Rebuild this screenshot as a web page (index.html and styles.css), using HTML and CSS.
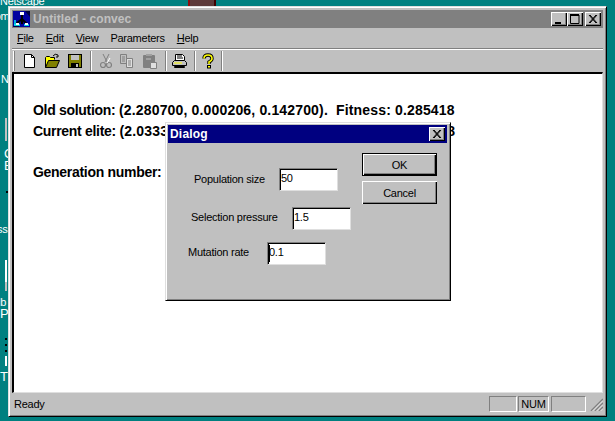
FILE: index.html
```html
<!DOCTYPE html>
<html lang="en">
<head>
<meta charset="UTF-8">
<title>Untitled - convec</title>
<link rel="stylesheet" href="styles.css">
</head>
<body>
  <!-- desktop icons showing behind the window -->
  <div class="desk-text" style="left:0;top:-6px">Netscape</div>
  <div class="desk-text" style="left:-13px;top:9px">Com</div>
  <div class="desk-text" style="left:1px;top:72px">N</div>
  <div class="desk-text big" style="left:4px;top:147px">C</div>
  <div class="desk-text big" style="left:4px;top:159px">E</div>
  <div class="desk-text" style="left:-10px;top:222px">Ass</div>
  <div class="desk-text" style="left:-9px;top:295px">Alb</div>
  <div class="desk-text big" style="left:0;top:307px">P</div>
  <div class="desk-text big" style="left:0;top:370px">T</div>
  <div class="desk-icon" style="left:188px;top:0;width:28px;height:6px"></div>
  <div class="desk-bit bit-grey" style="left:5px;top:118px;height:23px"></div>
  <div class="desk-bit bit-dark" style="left:6px;top:191px;height:2px"></div>
  <div class="desk-bit bit-white" style="left:5px;top:260px;height:22px"></div>
  <div class="desk-bit bit-grey" style="left:5px;top:282px;height:9px"></div>
  <div class="desk-bit bit-dark" style="left:5px;top:338px;height:2px"></div>
  <div class="desk-bit bit-dark" style="left:5px;top:344px;height:2px"></div>
  <div class="desk-bit bit-dark" style="left:5px;top:350px;height:2px"></div>
  <div class="desk-bit bit-white" style="left:5px;top:356px;height:10px"></div>

  <div class="window">
    <div class="titlebar">
      <svg class="app-icon" viewBox="0 0 17 16">
        <rect width="17" height="16" fill="#0000a0"/>
        <path d="M0 16L6 9V16zM17 0v6l-5-6z" fill="#000040"/>
        <path d="M9 3v5M3 13l6-5 5 5M9 8v5" stroke="#000" stroke-width="2" fill="none"/>
        <path d="M2 9v5M1 14h6M11 14h5" stroke="#00ffff" stroke-width="1.4" fill="none"/>
        <rect x="7" y="1" width="4" height="3" fill="#ffffff"/>
        <rect x="3" y="12" width="3" height="2" fill="#ffffff"/>
        <rect x="12" y="12" width="3" height="2" fill="#ffffff"/>
      </svg>
      <span class="title-text">Untitled - convec</span>
      <div class="caption-btns">
        <button class="cap-btn"><svg viewBox="0 0 16 14"><rect x="4" y="10" width="6" height="2" fill="#000"/></svg></button>
        <button class="cap-btn"><svg viewBox="0 0 16 14"><path d="M3 2.500h9M3 3.500h9M3.500 3v8.500h8.500V3" stroke="#000" fill="none"/></svg></button>
        <button class="cap-btn close-gap"><svg viewBox="0 0 16 14"><path d="M4 3l7 8M5 3l7 8M11 3l-7 8M12 3l-7 8" stroke="#000" fill="none"/></svg></button>
      </div>
    </div>

    <div class="menubar">
      <span><u>F</u>ile</span>
      <span><u>E</u>dit</span>
      <span><u>V</u>iew</span>
      <span>Parameters</span>
      <span><u>H</u>elp</span>
    </div>

    <div class="toolbar">
      <div class="grip"></div>
      <svg class="tool t-new" width="16" height="16" viewBox="0 0 16 16"><path d="M2.500 1.500h7l3 3v10h-10z" fill="#fff" stroke="#000"/><path d="M9.500 1.500v3h3" fill="none" stroke="#000"/></svg>
      <svg class="tool t-open" width="17" height="16" viewBox="0 0 17 16"><path d="M9 3q2-3 5-1M14 2v2h-2" fill="none" stroke="#000"/><path d="M1.500 14.500v-10l1-1h3l1 1h4v2" fill="#ffff00" stroke="#000"/><path d="M1.500 14.500l3-7h11l-3 7z" fill="#808000" stroke="#000"/></svg>
      <svg class="tool t-save" width="16" height="16" viewBox="0 0 16 16"><rect x="1.500" y="1.500" width="13" height="13" fill="#808000" stroke="#000"/><rect x="4" y="2" width="8" height="5" fill="#c0c0c0"/><rect x="4" y="10" width="8" height="5" fill="#000"/><rect x="9" y="11" width="2" height="3" fill="#c0c0c0"/></svg>
      <div class="sep s-a"></div>
      <svg class="tool t-cut" width="12" height="16" viewBox="0 0 12 16"><path d="M3 1l4 8M9 1L5 9" stroke="#808080" fill="none"/><circle cx="3" cy="12" r="2.500" fill="none" stroke="#808080" stroke-width="1.200"/><circle cx="9" cy="12" r="2.500" fill="none" stroke="#808080" stroke-width="1.200"/><path d="M10 5l-3 5" stroke="#fff"/></svg>
      <svg class="tool t-copy" width="16" height="16" viewBox="0 0 16 16"><path d="M1.500 1.500h6v9h-6z" fill="#c0c0c0" stroke="#808080"/><path d="M7.500 5.500h6v9h-6z" fill="#dfdfdf" stroke="#808080"/><path d="M3 4h3M3 6h3M3 8h3M9 8h3M9 10h3M9 12h3" stroke="#808080"/></svg>
      <svg class="tool t-paste" width="16" height="16" viewBox="0 0 16 16"><rect x="1" y="2" width="12" height="13" rx="1" fill="#808080"/><rect x="4" y="1" width="6" height="2" fill="#a0a0a0"/><path d="M4 6h5" stroke="#c0c0c0"/><path d="M8.500 9.500h6v6h-6z" fill="#dfdfdf" stroke="#808080"/></svg>
      <div class="sep s-b"></div>
      <svg class="tool t-print" width="17" height="16" viewBox="0 0 17 16"><path d="M4.500 7.500v-6h7l2 2v4" fill="#fff" stroke="#000"/><path d="M6 3h5M6 5h6" stroke="#000"/><path d="M1.500 9.500l2-2h10l2 2v3h-14z" fill="#c0c0c0" stroke="#000"/><path d="M3 10h8" stroke="#ffff00"/><path d="M3.500 13.500h10v1h-10z" fill="#808080" stroke="#000"/></svg>
      <div class="sep s-c"></div>
      <svg class="tool t-help" width="12" height="16" viewBox="0 0 12 16"><path d="M2 5.500q0-3.500 4-3.500t4 3.500q0 2-3 3.500v2" fill="none" stroke="#000" stroke-width="3.400"/><path d="M2 5.500q0-3.500 4-3.500t4 3.500q0 2-3 3.500v2" fill="none" stroke="#ffff00" stroke-width="1.600"/><rect x="5" y="12" width="4" height="3.500" fill="#000"/><rect x="6" y="13" width="2" height="1.500" fill="#ffff00"/></svg>
      <div class="sep s-d"></div>
    </div>

    <div class="client">
      <p class="line">Old solution: <span class="val">(2.280700, 0.000206, 0.142700).&nbsp; Fitness: 0.285418</span></p>
      <p class="line">Current elite: <span class="val">(2.033300, 0.000206, 0.142700).&nbsp; Fitness: 0.285418</span></p>
      <p class="line gen">Generation number: <span class="val">1</span></p>
    </div>

    <div class="statusbar">
      <span class="status-text">Ready</span>
      <span class="panel p-first"></span>
      <span class="panel p-num">NUM</span>
      <span class="panel p-last"></span>
      <svg class="size-grip" width="13" height="13" viewBox="0 0 13 13"><path d="M1 13L13 1M5 13l8-8M9 13l4-4" stroke="#808080" stroke-width="1.500"/><path d="M2.500 13L13 2.500M6.500 13L13 6.500M10.500 13l2.500-2.500" stroke="#fff" stroke-width="0.700"/></svg>
    </div>
  </div>

  <div class="dialog">
    <div class="dlg-title">
      <span>Dialog</span>
      <button class="cap-btn"><svg viewBox="0 0 16 14"><path d="M4 3l7 8M5 3l7 8M11 3l-7 8M12 3l-7 8" stroke="#000" fill="none"/></svg></button>
    </div>
    <div class="dlg-body">
      <div class="fields">
        <div class="field f-pop"><label>Population size</label><div class="input">50</div></div>
        <div class="field f-sel"><label>Selection pressure</label><div class="input">1.5</div></div>
        <div class="field f-mut"><label>Mutation rate</label><div class="input"><i class="caret"></i>0.1</div></div>
      </div>
      <div class="dlg-btns">
        <button class="push default">OK</button>
        <button class="push">Cancel</button>
      </div>
    </div>
  </div>
</body>
</html>
```

FILE: styles.css
```css
body {
  margin: 0;
  width: 615px;
  height: 421px;
  overflow: hidden;
  position: relative;
  background: #008080;
  font-family: "Liberation Sans", Arial, sans-serif;
  font-size: 11px;
  letter-spacing: -0.25px;
  color: #000;
}
.desk-text {
  position: absolute;
  color: #fff;
  line-height: 14px;
}
.desk-text.big { font-size: 13px; }
.desk-icon {
  position: absolute;
  background: #5c3a3a;
  border-left: 2px solid #8c1010;
  border-right: 2px solid #400000;
  box-sizing: border-box;
}
.desk-bit {
  position: absolute;
  width: 2px;
}
.bit-white { background: #fff; }
.bit-grey { background: #c0c0c0; }
.bit-dark { background: #000; }

.window {
  position: absolute;
  left: 8px;
  top: 6px;
  width: 599px;
  height: 411px;
  box-sizing: border-box;
  background: #c0c0c0;
  border: 1px solid #000;
  border-top-color: #dfdfdf;
  border-left-color: #dfdfdf;
  box-shadow: inset 1px 1px 0 #fff, inset -1px -1px 0 #808080;
  padding: 3px 3px 1px 3px;
  display: flex;
  flex-direction: column;
}
.titlebar {
  height: 18px;
  flex: none;
  background: #808080;
  display: flex;
  align-items: center;
  padding-left: 1px;
  padding-right: 2px;
}
.app-icon {
  width: 17px;
  height: 16px;
  margin-right: 3px;
}
.title-text {
  color: #c0c0c0;
  font-weight: bold;
  font-size: 12px;
  letter-spacing: 0.1px;
}
.caption-btns {
  margin-left: auto;
  display: flex;
}
.cap-btn {
  width: 16px;
  height: 14px;
  padding: 0;
  border: 0;
  background: #c0c0c0;
  box-shadow: inset 1px 1px 0 #fff, inset -1px -1px 0 #000, inset -2px -2px 0 #808080;
  display: block;
}
.cap-btn svg {
  display: block;
  width: 16px;
  height: 14px;
}
.close-gap { margin-left: 2px; }

.menubar {
  height: 20px;
  flex: none;
  display: flex;
  align-items: center;
  padding-left: 5px;
  gap: 12px;
}
.toolbar {
  height: 24px;
  flex: none;
  box-sizing: border-box;
  border-top: 1px solid #808080;
  box-shadow: inset 0 1px 0 #fff;
  display: flex;
  align-items: center;
  padding-left: 1px;
}
.grip {
  width: 1px;
  height: 20px;
  flex: none;
  background: #fff;
  border-right: 1px solid #808080;
  margin-right: 7px;
}
.tool { flex: none; display: block; }
.t-new { margin-right: 6px; }
.t-open { margin-right: 6px; }
.t-save { margin-right: 7px; }
.sep {
  width: 1px;
  height: 20px;
  flex: none;
  background: #808080;
  border-right: 1px solid #fff;
}
.s-a { margin-right: 8px; }
.t-cut { margin-right: 7px; }
.t-copy { margin-right: 7px; }
.t-paste { margin-right: 7px; }
.s-b { margin-right: 4px; }
.t-print { margin-right: 6px; }
.s-c { margin-right: 6px; }
.t-help { margin-right: 7px; }

.client {
  flex: 1;
  box-sizing: border-box;
  background: #fff;
  border-top: 2px solid #000;
  border-left: 2px solid #000;
  border-right: 1px solid #dfdfdf;
  border-bottom: 1px solid #dfdfdf;
  padding: 26px 0 0 19px;
  overflow: hidden;
}
.line {
  margin: 0;
  font-weight: bold;
  font-size: 14px;
  line-height: 21px;
  letter-spacing: -0.3px;
  white-space: pre;
}
.val { letter-spacing: 0.16px; }
.gen { margin-top: 20px; }

.statusbar {
  height: 22px;
  flex: none;
  display: flex;
  align-items: center;
}
.status-text {
  margin-left: 2px;
  margin-right: auto;
}
.panel {
  height: 16px;
  box-sizing: border-box;
  border: 1px solid;
  border-color: #808080 #fff #fff #808080;
  text-align: center;
  line-height: 15px;
}
.p-first { width: 28px; margin-right: 1px; }
.p-num { width: 31px; margin-right: 2px; }
.p-last { width: 35px; margin-right: 4px; }
.size-grip { flex: none; }

.dialog {
  position: absolute;
  left: 165px;
  top: 122px;
  width: 286px;
  height: 179px;
  box-sizing: border-box;
  background: #c0c0c0;
  border: 1px solid #000;
  border-top-color: #dfdfdf;
  border-left-color: #dfdfdf;
  box-shadow: inset 1px 1px 0 #fff, inset -1px -1px 0 #808080;
  padding: 2px 3px 2px 2px;
}
.dlg-title {
  height: 18px;
  background: #000080;
  color: #fff;
  font-weight: bold;
  font-size: 12px;
  letter-spacing: 0.2px;
  display: flex;
  align-items: center;
  justify-content: space-between;
  padding: 0 2px 0 2px;
}
.dlg-body {
  display: flex;
  justify-content: space-between;
}
.fields { padding-top: 25px; }
.field {
  display: flex;
  align-items: center;
  height: 23px;
}
.field label {
  display: block;
  margin-bottom: 3px;
}
.f-pop { margin-left: 26px; }
.f-sel { margin-left: 23px; margin-top: 16px; }
.f-mut { margin-left: 20px; margin-top: 12px; }
.f-pop label { width: 85px; margin-bottom: 2px; }
.f-sel label { width: 101px; }
.f-mut label { width: 79px; }
.input {
  width: 59px;
  height: 23px;
  box-sizing: border-box;
  background: #fff;
  border: 1px solid;
  border-color: #808080 #dfdfdf #dfdfdf #808080;
  box-shadow: inset 1px 1px 0 #000;
  padding-left: 1px;
  line-height: 19px;
  position: relative;
}
.caret {
  position: absolute;
  left: 1px;
  top: 2px;
  width: 1px;
  height: 17px;
  background: #000;
}
.dlg-btns {
  display: flex;
  flex-direction: column;
  gap: 5px;
  padding: 10px 10px 0 0;
}
.push {
  width: 75px;
  height: 23px;
  padding: 0;
  border: 0;
  background: #c0c0c0;
  font-family: inherit;
  font-size: 11px;
  letter-spacing: inherit;
  color: #000;
  box-shadow: inset 1px 1px 0 #fff, inset -1px -1px 0 #000, inset -2px -2px 0 #808080;
}
.default {
  outline: 1px solid #000;
  outline-offset: -1px;
  box-shadow: inset 2px 2px 0 #fff, inset -2px -2px 0 #000, inset -3px -3px 0 #808080;
}
```
